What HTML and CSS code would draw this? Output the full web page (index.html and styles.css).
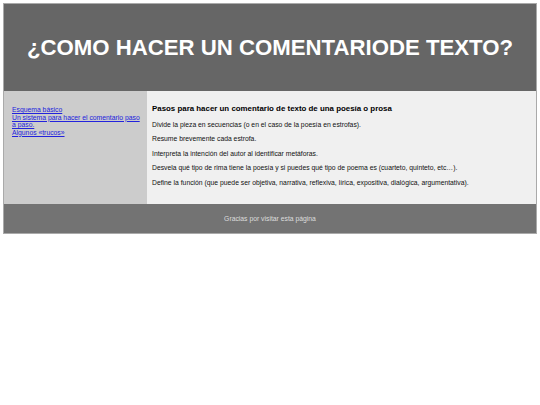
FILE: index.html
```html
<!DOCTYPE html>
<html lang="es">
<head>
<meta charset="utf-8">
<title>¿Como hacer un comentario de texto?</title>
<link rel="stylesheet" href="styles.css">
</head>
<body>
<div class="page">
  <header class="header">
    <h1 class="title">¿COMO HACER UN COMENTARIODE TEXTO?</h1>
  </header>
  <div class="content">
    <nav class="sidebar">
      <a href="#">Esquema básico</a><br>
      <a href="#">Un sistema para hacer el comentario paso a paso.</a><br>
      <a href="#">Algunos «trucos»</a>
    </nav>
    <main class="main">
      <h2 class="main-title">Pasos para hacer un comentario de texto de una poesía o prosa</h2>
      <p>Divide la pieza en secuencias (o en el caso de la poesía en estrofas).</p>
      <p>Resume brevemente cada estrofa.</p>
      <p>Interpreta la intención del autor al identificar metáforas.</p>
      <p>Desvela qué tipo de rima tiene la poesía y si puedes qué tipo de poema es (cuarteto, quinteto, etc…).</p>
      <p>Define la función (que puede ser objetiva, narrativa, reflexiva, lírica, expositiva, dialógica, argumentativa).</p>
    </main>
  </div>
  <footer class="footer">Gracias por visitar esta página</footer>
</div>
</body>
</html>
```

FILE: styles.css
```css
html, body {
  margin: 0;
  padding: 0;
  background: #ffffff;
}
body {
  font-family: "Liberation Sans", Arial, sans-serif;
  padding: 3px;
}
.page {
  border: 1px solid #aaaaaa;
}
.header {
  background: #666666;
  height: 87px;
  display: flex;
  align-items: center;
  justify-content: center;
}
.title {
  margin: 0;
  color: #ffffff;
  font-size: 22.2px;
  font-weight: bold;
}
.content {
  display: flex;
}
.sidebar {
  width: 132px;
  flex: none;
  background: #cccccc;
  padding: 15px 3px 8px 8px;
  font-size: 6.8px;
  line-height: 7.6px;
}
.sidebar a {
  color: #2222dd;
}
.main {
  flex: 1;
  background: #f0f0f0;
  padding: 4px 5px 11px 5px;
  color: #111111;
}
.main-title {
  font-size: 7.9px;
  font-weight: bold;
  line-height: 10px;
  margin: 9px 0 7px 0;
  color: #000000;
}
.main p {
  font-size: 6.8px;
  line-height: 8px;
  margin: 6.4px 0;
}
.main p:first-of-type {
  margin-top: 7px;
}
.footer {
  background: #737373;
  color: #dddddd;
  height: 29px;
  font-size: 6.8px;
  display: flex;
  align-items: center;
  justify-content: center;
}
```
